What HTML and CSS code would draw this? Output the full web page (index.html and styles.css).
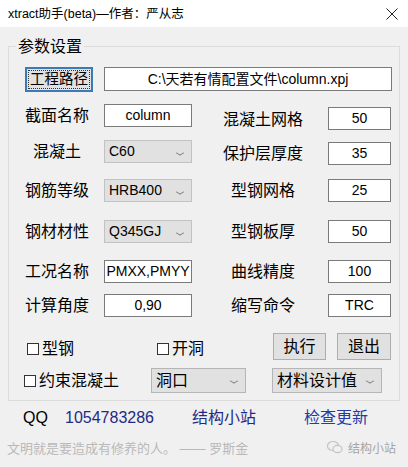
FILE: index.html
```html
<!DOCTYPE html>
<html lang="zh-CN">
<head>
    <meta charset="UTF-8">
    <title>xtract助手</title>
    <link rel="stylesheet" href="styles.css">
</head>
<body>
    <div class="titlebar">
        <span class="title">xtract助手(beta)—作者：严从志</span>
        <svg class="close" width="12" height="12" viewBox="0 0 12 12">
            <path d="M0.5 0.5 L11.5 11.5 M11.5 0.5 L0.5 11.5" stroke="#222" stroke-width="1" fill="none"/>
        </svg>
    </div>

    <fieldset class="group">
        <legend>参数设置</legend>
        <div class="form-grid">
            <button class="btn btn-focus path-btn"><span>工程路径</span></button>
            <div class="input path">C:\天若有情配置文件\column.xpj</div>

            <div class="lbl">截面名称</div>
            <div class="input">column</div>
            <div class="lbl-r low4">混凝土网格</div>
            <div class="input low3">50</div>

            <div class="lbl">混凝土</div>
            <div class="select">C60<i class="arrow"></i></div>
            <div class="lbl-r low2">保护层厚度</div>
            <div class="input low2">35</div>

            <div class="lbl">钢筋等级</div>
            <div class="select">HRB400<i class="arrow"></i></div>
            <div class="lbl-r">型钢网格</div>
            <div class="input">25</div>

            <div class="lbl">钢材材性</div>
            <div class="select">Q345GJ<i class="arrow"></i></div>
            <div class="lbl-r">型钢板厚</div>
            <div class="input">50</div>

            <div class="lbl">工况名称</div>
            <div class="input">PMXX,PMYY</div>
            <div class="lbl-r">曲线精度</div>
            <div class="input">100</div>

            <div class="lbl">计算角度</div>
            <div class="input">0,90</div>
            <div class="lbl-r">缩写命令</div>
            <div class="input">TRC</div>
        </div>

        <div class="opts">
            <div class="opt-row top">
                <label class="chk w-a"><span class="box"></span>型钢</label>
                <label class="chk w-b"><span class="box"></span>开洞</label>
                <button class="btn run">执行</button>
                <button class="btn quit">退出</button>
            </div>
            <div class="opt-row bottom">
                <label class="chk w-c"><span class="box"></span>约束混凝土</label>
                <div class="select big hole">洞口<i class="arrow"></i></div>
                <div class="select big mat">材料设计值<i class="arrow"></i></div>
            </div>
        </div>
    </fieldset>

    <div class="footer">
        <span>QQ</span>
        <span class="link">1054783286</span>
        <span class="link">结构小站</span>
        <span class="link update">检查更新</span>
    </div>

    <div class="quote-row">
        <span class="quote">文明就是要造成有修养的人。 —— 罗斯金</span>
        <span class="mark">
            <svg width="16" height="14" viewBox="0 0 16 14">
                <ellipse cx="6" cy="6" rx="5.5" ry="4.5" fill="none" stroke="#c4c4c4" stroke-width="1.2"/>
                <ellipse cx="10.5" cy="9" rx="4.5" ry="3.6" fill="#f0f0f0" stroke="#c4c4c4" stroke-width="1.2"/>
            </svg>
            结构小站
        </span>
    </div>
</body>
</html>
```

FILE: styles.css
```css
* {
    box-sizing: border-box;
}
body {
    margin: 0;
    width: 408px;
    height: 467px;
    background: #f0f0f0;
    font-family: "Liberation Sans", "Noto Sans CJK SC", sans-serif;
    color: #000;
    overflow: hidden;
}
.titlebar {
    height: 27px;
    background: #fff;
    display: flex;
    align-items: center;
    justify-content: space-between;
    padding: 0 10px 0 8px;
}
.title {
    font-size: 12.5px;
    line-height: 16px;
}
.group {
    margin: 9px 0 0 8px;
    width: 392px;
    border: 1px solid #dcdcdc;
    padding: 10px 8px 7px 16px;
}
.group legend {
    font-size: 16px;
    line-height: 21px;
    padding: 0 2px;
    margin-left: -9px;
}
.form-grid {
    display: grid;
    grid-template-columns: 79px 88px 136px 63px;
    grid-template-rows: 37px 36px 39px 41px 40px 34px 39px;
    align-items: start;
}
.lbl, .lbl-r {
    font-size: 16px;
    line-height: 23px;
    white-space: nowrap;
}
.lbl {
    width: 64px;
    text-align: center;
}
.lbl-r {
    text-align: center;
    padding-left: 6px;
}
.low2 {
    margin-top: 2px;
}
.low3 {
    margin-top: 3px;
}
.low4 {
    margin-top: 4px;
}
.input {
    height: 23px;
    background: #fff;
    border: 1px solid #7a7a7a;
    font-size: 14px;
    line-height: 21px;
    text-align: center;
    white-space: nowrap;
    overflow: hidden;
}
.path {
    grid-column: 2 / 5;
    width: 288px;
    height: 24px;
    line-height: 22px;
}
.select {
    position: relative;
    height: 23px;
    background: #e1e1e1;
    border: 1px solid #c2c2c2;
    font-size: 14px;
    line-height: 21px;
    padding-left: 4px;
    white-space: nowrap;
}
.arrow {
    position: absolute;
    right: 8px;
    top: 9px;
    width: 6px;
    height: 6px;
    border-right: 1px solid #777;
    border-bottom: 1px solid #777;
    transform: scaleY(0.6) rotate(45deg);
}
.btn {
    background: #e1e1e1;
    border: 1px solid #adadad;
    font-family: inherit;
    font-size: 16px;
    line-height: 20px;
    padding: 0;
    color: #000;
}
.path-btn {
    width: 68px;
    height: 25px;
    border: 2px solid #3a7ab8;
    padding: 1px;
    font-size: 14.5px;
}
.path-btn span {
    display: block;
    height: 100%;
    border: 1px dotted #333;
    line-height: 17px;
    white-space: nowrap;
}
.opts {
    display: flex;
    flex-direction: column;
    gap: 8px;
}
.opt-row {
    display: flex;
    align-items: center;
}
.opt-row.top {
    height: 27px;
}
.opt-row.bottom {
    height: 25px;
}
.chk {
    display: flex;
    align-items: center;
    gap: 3px;
    font-size: 16px;
    line-height: 20px;
    white-space: nowrap;
}
.box {
    width: 12px;
    height: 12px;
    background: #fff;
    border: 1px solid #333;
}
.w-a {
    width: 132px;
    padding-left: 2px;
    padding-top: 4px;
}
.w-b {
    width: 116px;
    padding-top: 4px;
}
.w-c {
    width: 127px;
    margin-left: -1px;
}
.run {
    width: 53px;
    height: 27px;
}
.quit {
    width: 54px;
    height: 27px;
    margin-left: 11px;
}
.select.big {
    height: 25px;
    font-size: 16px;
    line-height: 23px;
    border-color: #b5b5b5;
}
.select.big .arrow {
    top: 9px;
}
.hole {
    width: 95px;
}
.mat {
    width: 110px;
    margin-left: 26px;
}
.footer {
    display: grid;
    grid-template-columns: 42px 127px 112px auto;
    padding-left: 23px;
    margin-top: 6px;
    font-size: 16px;
    line-height: 22px;
}
.link {
    color: #1f2a86;
}
.update {
    color: #243aa6;
}
.quote-row {
    display: flex;
    justify-content: space-between;
    align-items: center;
    padding: 0 12px 0 7px;
    margin-top: 8px;
    height: 20px;
}
.quote {
    font-size: 13px;
    color: #b9b9b9;
}
.mark {
    display: flex;
    align-items: center;
    gap: 5px;
    font-size: 12px;
    color: #a5a5a5;
}
```
